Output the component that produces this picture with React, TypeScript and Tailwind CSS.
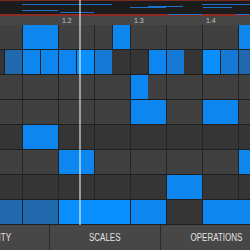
import React from 'react'

type Note = { start: number; len: number; shade: string }

const BRIGHT = 'bg-[#0d86f0]'
const MID = 'bg-[#1579d6]'
const DARK = 'bg-[#2169ad]'
const HOT = 'bg-[#0a8fff]'

// each row: lighter or darker lane, and notes in 18px steps (step 0 starts at x=-14)
const rows: { light: boolean; notes: Note[] }[] = [
  { light: true, notes: [{ start: 2, len: 2, shade: BRIGHT }, { start: 7, len: 1, shade: BRIGHT }, { start: 14, len: 1, shade: BRIGHT }] },
  {
    light: false,
    notes: [
      { start: 1, len: 1, shade: DARK },
      { start: 2, len: 1, shade: BRIGHT },
      { start: 3, len: 1, shade: BRIGHT },
      { start: 4, len: 1, shade: BRIGHT },
      { start: 5, len: 1, shade: HOT },
      { start: 6, len: 1, shade: MID },
      { start: 9, len: 1, shade: BRIGHT },
      { start: 10, len: 1, shade: MID },
      { start: 12, len: 1, shade: HOT },
      { start: 13, len: 1, shade: MID },
      { start: 14, len: 1, shade: DARK },
    ],
  },
  { light: true, notes: [{ start: 8, len: 1, shade: BRIGHT }] },
  { light: true, notes: [{ start: 8, len: 2, shade: BRIGHT }, { start: 12, len: 2, shade: BRIGHT }] },
  { light: false, notes: [{ start: 2, len: 2, shade: BRIGHT }] },
  { light: true, notes: [{ start: 4, len: 2, shade: BRIGHT }, { start: 14, len: 1, shade: BRIGHT }] },
  { light: false, notes: [{ start: 10, len: 2, shade: BRIGHT }] },
  {
    light: false,
    notes: [
      { start: 0, len: 2, shade: DARK },
      { start: 2, len: 2, shade: DARK },
      { start: 4, len: 4, shade: HOT },
      { start: 8, len: 2, shade: BRIGHT },
      { start: 12, len: 3, shade: BRIGHT },
    ],
  },
]

const STEPS = 15

function Lane({ light, notes }: { light: boolean; notes: Note[] }) {
  const cells: React.ReactNode[] = []
  let i = 0
  while (i < STEPS) {
    const n = notes.find((x) => x.start === i)
    if (n) {
      cells.push(
        <div
          key={i}
          className={`h-full shrink-0 border-l border-[#1f1f1f] ${n.shade}`}
          style={{ width: n.len * 18 }}
        />
      )
      i += n.len
    } else {
      cells.push(
        <div
          key={i}
          className={`h-full w-[18px] shrink-0 ${i % 2 === 0 ? 'border-l border-[#252525]' : ''} ${
            light ? 'bg-[#404040]' : 'bg-[#353535]'
          }`}
        />
      )
      i += 1
    }
  }
  return <div className="flex h-[25px] -ml-[14px] border-b border-[#1f1f1f]">{cells}</div>
}

function Overview() {
  const segs: [number, number, number][] = [
    [2.5, 22, 112],
    [2.5, 202, 250],
    [4.5, 148, 183],
    [5.5, 130, 166],
    [5.5, 203, 232],
    [8.5, 22, 58],
    [10.5, 60, 94],
    [12.5, 168, 202],
    [12.5, 236, 250],
  ]
  return (
    <svg width="250" height="13" className="block">
      {segs.map(([y, a, b], k) => (
        <line key={k} x1={a} x2={b} y1={y} y2={y} stroke="#1c72c8" strokeWidth="1" />
      ))}
    </svg>
  )
}

const Tab = ({ label, last }: { label: string; last?: boolean }) => (
  <div
    className={`w-[111px] shrink-0 flex items-center justify-center ${last ? '' : 'border-r border-[#2a2a2a]'}`}
  >
    <span className="inline-block scale-x-[0.8] whitespace-nowrap">{label}</span>
  </div>
)

export default function App() {
  return (
    <div
      className="relative w-[250px] h-[250px] overflow-hidden bg-[#2b2b2b]"
      style={{ fontFamily: '"Liberation Sans", Arial, sans-serif' }}
    >
      {/* overview strip */}
      <div className="h-[16px] bg-[#1c1c1c] border-t border-[#7a2a20] border-b-2 border-b-[#8c2c22] pt-px">
        <Overview />
      </div>

      {/* ruler, one cell per beat (4 steps); first beat label is off screen */}
      <div className="flex h-[9px] -ml-[14px] bg-[#464646] text-[7px] leading-[9px] text-[#c4c4c4]">
        {['', '1.2', '1.3', '1.4'].map((b, k) => (
          <div key={k} className="w-[72px] shrink-0 pl-[4px]">
            {b}
          </div>
        ))}
      </div>

      {/* lanes */}
      <div className="flex flex-col">
        {rows.map((r, k) => (
          <Lane key={k} light={r.light} notes={r.notes} />
        ))}
      </div>

      {/* tabs */}
      <div className="flex h-[25px] -ml-[61px] bg-[#474747] text-[10px] text-[#e2e2e2]">
        <Tab label="DENSITY" />
        <Tab label="SCALES" />
        <Tab label="OPERATIONS" last />
      </div>

      {/* playhead */}
      <div className="absolute left-[79px] top-0 h-[225px] w-[2px] bg-white/50" />
    </div>
  )
}
